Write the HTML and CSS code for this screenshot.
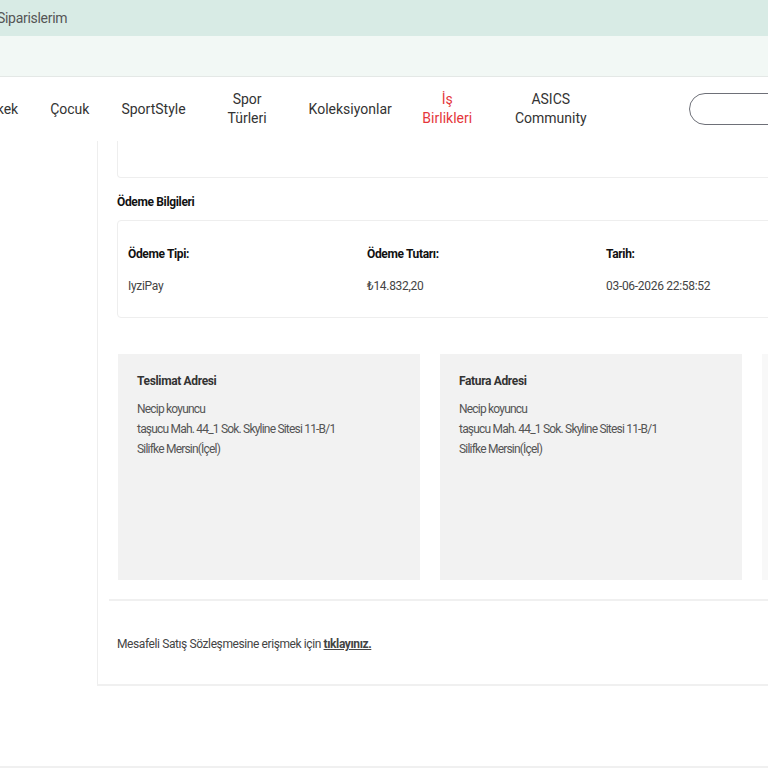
FILE: index.html
```html
<!DOCTYPE html>
<html>
  <head>
    <title>Siparislerim</title>
    <link rel="stylesheet" href="styles.css">
  </head>
  <body>
    <div id="topbar">
      <div class="crumb">Siparislerim</div>
    </div>
    <div id="subbar"></div>
    <div id="nav">
      <div class="nav_item">Erkek</div>
      <div class="nav_item">Çocuk</div>
      <div class="nav_item">SportStyle</div>
      <div class="nav_item narrow">Spor Türleri</div>
      <div class="nav_item">Koleksiyonlar</div>
      <div class="nav_item red">İş Birlikleri</div>
      <div class="nav_item mid">ASICS Community</div>
      <div class="search"></div>
    </div>
    <div id="main">
      <div class="sidebar"></div>
      <div class="content">
        <div class="inner">
          <div class="prev_card"></div>
          <h2>Ödeme Bilgileri</h2>
          <div class="pay_card">
            <div class="pay_col">
              <div class="key">Ödeme Tipi:</div>
              <div class="value">IyziPay</div>
            </div>
            <div class="pay_col">
              <div class="key">Ödeme Tutarı:</div>
              <div class="value">₺14.832,20</div>
            </div>
            <div class="pay_col">
              <div class="key">Tarih:</div>
              <div class="value">03-06-2026 22:58:52</div>
            </div>
          </div>
          <div class="addresses">
            <div class="address">
              <h3>Teslimat Adresi</h3>
              <p>Necip koyuncu</p>
              <p>taşucu Mah. 44_1 Sok. Skyline Sitesi 11-B/1</p>
              <p>Silifke Mersin(İçel)</p>
            </div>
            <div class="address">
              <h3>Fatura Adresi</h3>
              <p>Necip koyuncu</p>
              <p>taşucu Mah. 44_1 Sok. Skyline Sitesi 11-B/1</p>
              <p>Silifke Mersin(İçel)</p>
            </div>
            <div class="address light"></div>
          </div>
        </div>
        <div class="divider"></div>
        <div class="contract">
          Mesafeli Satış Sözleşmesine erişmek için <a href="#">tıklayınız.</a>
        </div>
      </div>
    </div>
    <div id="footer"></div>
  </body>
</html>
```

FILE: styles.css
```css
html, body {
  margin: 0;
  overflow: hidden;
}

body {
  background-color: #FFFFFF;
  font-family: Roboto, "Liberation Sans", sans-serif;
  color: #333333;
  width: 768px;
  height: 768px;
}

#topbar {
  background-color: #D8EBE5;
  height: 36px;
  display: flex;
  align-items: center;
}

.crumb {
  margin-left: -3px;
  font-size: 14px;
  letter-spacing: -0.3px;
  color: #555555;
}

#subbar {
  background-color: #F2F8F5;
  height: 40px;
  border-bottom: 1px solid #E4E8E6;
}

#nav {
  height: 64px;
  display: flex;
  align-items: center;
  margin-left: -32px;
  width: 1200px;
}

.nav_item {
  padding: 0 16px;
  font-size: 14px;
  line-height: 19px;
  color: #333333;
  text-align: center;
}

.nav_item.narrow {
  width: 59px;
}

.nav_item.mid {
  width: 72px;
}

.nav_item.red {
  width: 55px;
  padding: 0 24px 0 12px;
  color: #E5363B;
}

.search {
  margin-left: 86px;
  width: 200px;
  height: 30px;
  border: 1px solid #6E7078;
  border-radius: 16px;
}

#main {
  display: flex;
  width: 1200px;
}

.sidebar {
  width: 97px;
  flex-shrink: 0;
}

.content {
  flex: 1;
  border-left: 1px solid #EEEEEE;
  border-bottom: 2px solid #F0F0F0;
  height: 543px;
}

.inner {
  padding-left: 19px;
}

.prev_card {
  height: 36px;
  border: 1px solid #EEEEEE;
  border-top: none;
  border-radius: 0 0 4px 4px;
}

h2 {
  margin: 17px 0 0 0;
  font-size: 12px;
  line-height: 14px;
  font-weight: bold;
  letter-spacing: -0.35px;
  color: #111111;
}

.pay_card {
  margin-top: 11px;
  height: 98px;
  border: 1px solid #EEEEEE;
  border-radius: 4px;
  display: flex;
  padding-left: 10px;
  box-sizing: border-box;
  padding-top: 26px;
}

.pay_col {
  width: 239px;
}

.key {
  font-size: 12px;
  line-height: 14px;
  font-weight: bold;
  letter-spacing: -0.35px;
  color: #111111;
}

.value {
  margin-top: 18px;
  font-size: 12px;
  line-height: 14px;
  letter-spacing: -0.3px;
  color: #444444;
}

.addresses {
  margin-top: 36px;
  display: flex;
  gap: 20px;
  padding-left: 1px;
}

.address {
  width: 302px;
  height: 226px;
  background-color: #F2F2F2;
  box-sizing: border-box;
  padding: 20px 19px;
}

.address.light {
  background-color: #F8F8F8;
}

h3 {
  margin: 0 0 11px 0;
  font-size: 12px;
  line-height: 14px;
  font-weight: bold;
  letter-spacing: -0.35px;
  color: #333333;
}

.address p {
  margin: 0;
  font-size: 12px;
  line-height: 20px;
  letter-spacing: -0.8px;
  color: #555555;
}

.divider {
  margin: 19px 0 0 11px;
  border-top: 2px solid #F0F0F0;
}

.contract {
  padding: 36px 0 0 19px;
  font-size: 12px;
  line-height: 14px;
  letter-spacing: -0.4px;
  color: #444444;
}

.contract a {
  color: #444444;
  font-weight: bold;
}

#footer {
  margin-top: 80px;
  border-top: 3px solid #F0F0F0;
}
```
